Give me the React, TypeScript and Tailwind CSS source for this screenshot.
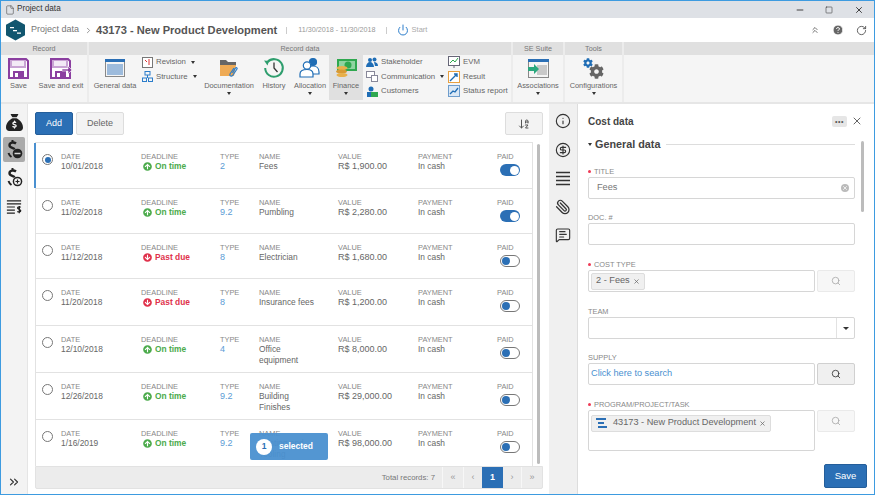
import { ChevronRight, ChevronsRight, ChevronsUp, CircleHelp, File, Info, Minus, Paperclip, Power, RotateCw, Search, Square, X, CircleDollarSign, MessageSquareText, ArrowDownAZ } from 'lucide-react'
import { FaSackDollar } from 'react-icons/fa6'
import { FaArrowCircleUp, FaArrowCircleDown, FaCog } from 'react-icons/fa'
import type { ReactNode } from 'react'

const rows = [
  { date: '10/01/2018', late: false, type: '2', name: 'Fees', value: 'R$ 1,900.00', paid: true, h: 'h-[46px]' },
  { date: '11/02/2018', late: false, type: '9.2', name: 'Pumbling', value: 'R$ 2,280.00', paid: true, h: 'h-[45px]' },
  { date: '11/12/2018', late: true, type: '8', name: 'Electrician', value: 'R$ 1,680.00', paid: false, h: 'h-[45px]' },
  { date: '11/20/2018', late: true, type: '8', name: 'Insurance fees', value: 'R$ 1,200.00', paid: false, h: 'h-[47px]' },
  { date: '12/10/2018', late: false, type: '4', name: 'Office equipment', value: 'R$ 8,000.00', paid: false, h: 'h-[47px]' },
  { date: '12/26/2018', late: false, type: '9.2', name: 'Building Finishes', value: 'R$ 29,000.00', paid: false, h: 'h-[47px]' },
  { date: '1/16/2019', late: false, type: '9.2', name: 'Printing and Tooling', value: 'R$ 98,000.00', paid: false, h: 'h-[46px]' },
]

function Caret() {
  return <span className="inline-block w-0 h-0 border-x-[2.5px] border-x-transparent border-t-[3px] border-t-[#333]" />
}

function Floppy({ exit }: { exit?: boolean }) {
  return (
    <svg width="22" height="21" viewBox="0 0 22 21">
      <path d="M1 1h17l2 2v17H1z" fill="#fff" stroke="#8b3fa0" strokeWidth="2" />
      <rect x="2" y="2" width="16" height="8" fill="#c9a4d4" />
      <rect x="4" y="3" width="12" height="5" fill="#f3eaf6" />
      <rect x="5" y="13" width="11" height="7" fill="#8b3fa0" />
      <rect x="7" y="15" width="3" height="4" fill="#fff" />
      {exit && <path d="M12 11h6V8l4 4-4 4v-3h-6z" fill="#8b3fa0" stroke="#fff" strokeWidth=".6" />}
    </svg>
  )
}

function BigButton({ w, label, icon, caret, active }: { w: string; label: string; icon: ReactNode; caret?: boolean; active?: boolean }) {
  return (
    <div className={`${w} h-[45px] flex flex-col items-center pt-[2px] shrink-0 ${active ? 'bg-[#e0e0e0]' : ''}`}>
      <div className="h-[22px] flex items-center justify-center">{icon}</div>
      <div className="text-[7.4px] leading-[9px] mt-[1.5px] text-[#666] whitespace-nowrap">{label}</div>
      {caret && <div className="leading-[6px] mt-[2px] flex"><Caret /></div>}
    </div>
  )
}

function SmallButton({ label, icon, caret }: { label: string; icon: ReactNode; caret?: boolean }) {
  return (
    <div className="h-[14.5px] flex items-center gap-[2px] text-[7.8px] text-[#666] whitespace-nowrap">
      <span className="w-[12px] h-[12px] flex items-center justify-center shrink-0">{icon}</span>
      <span className="ml-[1px]">{label}</span>
      {caret && <span className="ml-[3px] flex"><Caret /></span>}
    </div>
  )
}

function Group({ title, w, children }: { title: string; w: string; children?: ReactNode }) {
  return (
    <div className={`${w} shrink-0 flex flex-col border-r-2 border-[#ececec] last:border-r-0`}>
      <div className="h-[13px] bg-[#e0e0e0] text-[7.2px] leading-[13px] text-center text-[#777]">{title}</div>
      <div className="flex-1 flex bg-[#f5f5f5]">{children}</div>
    </div>
  )
}

function Cell({ w, label, children }: { w: string; label: string; children: ReactNode }) {
  return (
    <div className={`${w} shrink-0`}>
      <div className="text-[7.4px] leading-[9px] text-[#888]">{label}</div>
      {children}
    </div>
  )
}

function Toggle({ on }: { on: boolean }) {
  return on ? (
    <div className="w-[20px] h-[12px] rounded-full bg-[#2b6fb5] flex items-center justify-end pr-[1px]">
      <div className="w-[9px] h-[9px] rounded-full bg-white" />
    </div>
  ) : (
    <div className="w-[20px] h-[12px] rounded-full bg-white border border-[#777] flex items-center pl-[1px]">
      <div className="w-[8px] h-[8px] rounded-full bg-[#2b6fb5]" />
    </div>
  )
}

function Row({ r, selected }: { r: (typeof rows)[number]; selected: boolean }) {
  return (
    <div className={`${r.h} relative flex pt-[9px] border-b border-[#e2e2e2] last:border-b-0`}>
      {selected && <div className="absolute left-[-2px] top-0 bottom-0 w-[2px] bg-[#4a90d0]" />}
      <div className="w-[25px] pl-[6px] pt-[2px] shrink-0">
        <div className="w-[11px] h-[11px] rounded-full border border-[#777] bg-white flex items-center justify-center">
          {selected && <div className="w-[6px] h-[6px] rounded-full bg-[#2b6fb5]" />}
        </div>
      </div>
      <Cell w="w-[80px]" label="DATE">
        <div className="text-[8.4px] leading-[11px] text-[#666]">{r.date}</div>
      </Cell>
      <Cell w="w-[79px]" label="DEADLINE">
        <div className={`flex items-center gap-[3px] pl-[2px] text-[8.4px] leading-[11px] font-bold ${r.late ? 'text-[#e0314b]' : 'text-[#4cab4c]'}`}>
          {r.late ? <FaArrowCircleDown size={9} /> : <FaArrowCircleUp size={9} />}
          {r.late ? 'Past due' : 'On time'}
        </div>
      </Cell>
      <Cell w="w-[39px]" label="TYPE">
        <div className="text-[9px] leading-[11px] text-[#5b9bd5]">{r.type}</div>
      </Cell>
      <Cell w="w-[79px]" label="NAME">
        <div className="text-[8.4px] leading-[11px] text-[#666] w-[62px]">{r.name}</div>
      </Cell>
      <Cell w="w-[80px]" label="VALUE">
        <div className="text-[9px] leading-[11px] text-[#666]">{r.value}</div>
      </Cell>
      <Cell w="w-[79px]" label="PAYMENT">
        <div className="text-[8.4px] leading-[11px] text-[#666]">In cash</div>
      </Cell>
      <Cell w="w-[30px]" label="PAID">
        <div className="pl-[3px] pt-[3px]"><Toggle on={r.paid} /></div>
      </Cell>
    </div>
  )
}

function CostIcon({ plus, lines }: { plus?: boolean; lines?: boolean }) {
  if (lines) {
    return (
      <svg width="16" height="16" viewBox="0 0 18 16" fill="none" stroke="#222" strokeWidth="1.4">
        <path d="M1 1h16M1 4.500h16M1 8h9M1 11.500h9M1 15h9" />
        <path d="M16.500 8.500c-.5-.8-3.500-1-3.500.7 0 1.900 3.600 1 3.600 3 0 1.700-3.100 1.500-3.800.6M15 7v8" />
      </svg>
    )
  }
  return (
    <svg width="17" height="21" viewBox="0 0 17 21" fill="none">
      <path d="M10 4.500C8 3 3.500 3 3.500 6.200 3.500 9.200 8 8.500 8.500 10.500" stroke="#222" strokeWidth="2.400" />
      <path d="M6.500 1v3" stroke="#222" strokeWidth="2" />
      <path d="M2.500 14c.5 1.500 1.500 3 3 4" stroke="#222" strokeWidth="2" />
      <circle cx="11.500" cy="14.500" r="4.800" fill="#222" />
      {plus ? <><circle cx="11.500" cy="14.500" r="3.300" fill="#f3f3f3" /><path d="M9.500 14.500h4M11.500 12.500v4" stroke="#222" strokeWidth="1.200" /></> : <path d="M8.500 14.500h6" stroke="#d8d8d8" strokeWidth="1.500" />}
    </svg>
  )
}

function Label({ text, req }: { text: string; req?: boolean }) {
  return (
    <div className="h-[11px] flex items-center text-[7.4px] text-[#888] whitespace-nowrap">
      {req && <span className="w-[3px] h-[3px] rounded-full bg-[#ef3a55] mr-[3px]" />}
      {text}
    </div>
  )
}

function SearchBtn({ active }: { active?: boolean }) {
  return (
    <div className={`w-[38px] h-[22px] shrink-0 rounded-[2px] border flex items-center justify-center ${active ? 'bg-[#f0f0f0] border-[#d0d0d0] text-[#333]' : 'bg-[#f7f7f7] border-[#eaeaea] text-[#aaa]'}`}>
      <Search size={10} strokeWidth={2} />
    </div>
  )
}

const inputCls = 'h-[22px] rounded-[2px] border border-[#d6d6d6] bg-white'

export default function App() {
  return (
    <div className="relative w-[875px] h-[495px] overflow-hidden bg-white border border-[#3d9be0] flex flex-col text-[#666]" style={{ fontFamily: '"Liberation Sans", sans-serif' }}>
      {/* window title */}
      <div className="h-[17px] bg-[#dee1e6] flex items-center pl-[4px] shrink-0">
        <File size={10} strokeWidth={1.200} className="text-[#333]" />
        <span className="ml-[2px] text-[8.200px] text-[#333]">Project data</span>
        <div className="ml-auto flex items-center text-[#222]">
          <span className="w-[29px] flex justify-center"><Minus size={10} /></span>
          <span className="w-[30px] flex justify-center"><Square size={8} strokeWidth={1.500} /></span>
          <span className="w-[30px] flex justify-center"><X size={10} /></span>
        </div>
      </div>

      {/* breadcrumb */}
      <div className="h-[24px] bg-white flex items-center pl-[4px] shrink-0">
        <svg width="21" height="22" viewBox="0 0 21 22">
          <path d="M10.500 0.500l9.500 5.200v10.600l-9.500 5.200L1 16.300V5.700z" fill="#11566f" />
          <path d="M5 8h4v1.300H5zM8 11h4v1.300H8zM12 13.500h4v1.300h-4z" fill="#fff" />
        </svg>
        <span className="ml-[5px] text-[9px] text-[#777]">Project data</span>
        <ChevronRight size={9} className="ml-[5px] text-[#777]" />
        <span className="ml-[3px] text-[11.100px] font-bold text-[#555]">43173 - New Product Development</span>
        <span className="ml-[9px] w-px h-[7px] bg-[#ccc]" />
        <span className="ml-[11px] text-[7.200px] text-[#999]">11/30/2018 - 11/30/2018</span>
        <span className="ml-[10px] w-px h-[7px] bg-[#ccc]" />
        <Power size={12} strokeWidth={2} className="ml-[10px] text-[#2b7dcb]" />
        <span className="ml-[3px] text-[7.500px] text-[#aaa]">Start</span>
        <div className="ml-auto flex items-center text-[#555] pr-[1px]">
          <span className="w-[22px] flex justify-center"><ChevronsUp size={10} /></span>
          <span className="w-[23px] flex justify-center"><CircleHelp size={12} fill="#666" stroke="#fff" /></span>
          <span className="w-[24px] flex justify-center"><RotateCw size={11} /></span>
        </div>
      </div>

      {/* ribbon */}
      <div className="h-[62px] flex shrink-0 border-b-2 border-[#e6e6e6]">
        <Group title="Record" w="w-[88px]">
          <BigButton w="w-[35px]" label="Save" icon={<Floppy />} />
          <BigButton w="w-[50px]" label="Save and exit" icon={<Floppy exit />} />
        </Group>
        <Group title="Record data" w="w-[424px]">
          <BigButton w="w-[52px]" label="General data" icon={
            <svg width="20" height="18" viewBox="0 0 20 18"><rect x=".5" y=".5" width="19" height="17" fill="#f5f5f5" stroke="#888" /><rect x="0" y="0" width="20" height="3" fill="#2b6fb5" /><rect x="2" y="5" width="16" height="11" fill="#9dbbdc" /></svg>
          } />
          <div className="w-[60px] flex flex-col">
            <SmallButton label="Revision" caret icon={<svg width="11" height="11"><rect x=".5" y=".5" width="10" height="10" fill="#fff" stroke="#777" /><path d="M3 3l2 2M7 2v6" stroke="#d33" /></svg>} />
            <SmallButton label="Structure" caret icon={<svg width="11" height="11" fill="none" stroke="#2b7dcb"><rect x="3" y=".5" width="5" height="3.500" /><rect x=".5" y="7" width="4" height="3.500" /><rect x="6.500" y="7" width="4" height="3.500" /><path d="M5.500 4v3" /></svg>} />
          </div>
          <BigButton w="w-[56px]" label="Documentation" caret icon={
            <svg width="20" height="22" viewBox="0 0 20 22"><path d="M1 3h6l2 2h8v4H1z" fill="#666" /><path d="M1 8h16l-2 11H1z" fill="#eeaa55" /><path d="M15 11l-4 6c-1 2 2 3 3 1l4-6c.7-1-1-2-1.500-1l-3 5" fill="none" stroke="#2b7dcb" strokeWidth="1.200" /></svg>
          } />
          <BigButton w="w-[34px]" label="History" icon={
            <svg width="22" height="22" viewBox="0 0 22 22" fill="none"><path d="M4.500 5A8.800 8.800 0 1 1 2.200 11" stroke="#2f9e6e" strokeWidth="2" /><path d="M1 3.500l5 .5-1.500 4.500z" fill="#2f9e6e" /><path d="M11 5.500V11l3.500 4" stroke="#333" strokeWidth="1.300" /></svg>
          } />
          <BigButton w="w-[38px]" label="Allocation" caret icon={
            <svg width="22" height="22" viewBox="0 0 22 22" fill="#fff" stroke="#1f6db5" strokeWidth="1.200"><circle cx="14" cy="5" r="3.500" fill="#1f6db5" /><path d="M9 14c0-3 2-5 5-5s6 2 6 6v2h-8" /><circle cx="8" cy="8.500" r="3.700" /><path d="M1 20v-3c0-3 3-4.500 7-4.500s6 2 6 4.500v3z" /></svg>
          } />
          <BigButton w="w-[34px]" active label="Finance" caret icon={
            <svg width="22" height="20" viewBox="0 0 22 20"><rect x="2" y="1" width="20" height="12" fill="#2fa84f" /><rect x="4" y="3" width="16" height="8" fill="#8fd4a0" /><circle cx="13" cy="7" r="3.500" fill="#2fa84f" /><ellipse cx="7" cy="10" rx="5.500" ry="2" fill="#e8b04a" /><ellipse cx="6.500" cy="13.500" rx="5.500" ry="2" fill="#d99a33" /><ellipse cx="7" cy="17" rx="5.500" ry="2" fill="#e8b04a" /></svg>
          } />
          <div className="w-[85px] pl-[3px]">
            <SmallButton label="Stakeholder" icon={<svg width="12" height="11" fill="#1f6db5"><circle cx="4" cy="3" r="2" /><circle cx="8.500" cy="2.500" r="2" /><path d="M0 10c0-3 2-5 4-5s4 2 4 5zM8 5c2 0 4 1 4 4H9z" /></svg>} />
            <SmallButton label="Communication" caret icon={<svg width="12" height="11" fill="#fff" stroke="#889"><rect x=".5" y=".5" width="8" height="6" /><rect x="5.500" y="4.500" width="6" height="6" /></svg>} />
            <SmallButton label="Customers" icon={<svg width="12" height="11"><circle cx="5" cy="3" r="2.500" fill="#1f6db5" /><rect x="1" y="6" width="8" height="5" fill="#1f6db5" /><rect x="5" y="6" width="7" height="5" fill="#2fa84f" /></svg>} />
          </div>
          <div className="flex-1">
            <SmallButton label="EVM" icon={<svg width="12" height="12" fill="none"><rect x=".5" y=".5" width="11" height="9" fill="#fff" stroke="#667" /><path d="M2 7l3-3 2 2 3-4" stroke="#2fa84f" /><path d="M6 10v2" stroke="#667" /></svg>} />
            <SmallButton label="Result" icon={<svg width="12" height="12" fill="none"><rect x=".5" y=".5" width="11" height="11" fill="#fff" stroke="#e8a040" /><path d="M2 10l7-7M6 3h3v3" stroke="#1f6db5" strokeWidth="1.400" /></svg>} />
            <SmallButton label="Status report" icon={<svg width="12" height="12" fill="none"><rect x=".5" y=".5" width="11" height="11" fill="#dbe8f5" stroke="#6f9dcc" /><path d="M2 9l3-3 2 1 3-4" stroke="#1f6db5" strokeWidth="1.300" /></svg>} />
          </div>
        </Group>
        <Group title="SE Suite" w="w-[52px]">
          <BigButton w="w-full" label="Associations" caret icon={
            <svg width="21" height="19" viewBox="0 0 21 19"><rect x=".5" y=".5" width="20" height="18" fill="#f5f5f5" stroke="#888" /><rect x="0" y="0" width="21" height="3" fill="#2b6fb5" /><rect x="9" y="6" width="10" height="10" fill="#c9c9c9" /><path d="M0 8h6V5l5 5-5 5v-3H0z" fill="#2aa87e" /></svg>
          } />
        </Group>
        <Group title="Tools" w="w-[59px]">
          <BigButton w="w-full" label="Configurations" caret icon={
            <div className="relative w-[21px] h-[21px]">
              <FaCog size={10} className="absolute left-0 top-0 text-[#1f6db5]" />
              <FaCog size={15} className="absolute right-0 bottom-0 text-[#666]" />
            </div>
          } />
        </Group>
        <Group title="" w="flex-1" />
      </div>

      {/* main */}
      <div className="flex-1 flex min-h-0">
        <div className="w-[27px] shrink-0 bg-[#f3f3f3] flex flex-col items-center pt-[5px] border-r border-[#e5e5e5]">
          <div className="h-[26px] flex items-center"><FaSackDollar size={17} className="text-[#222]" /></div>
          <div className="mt-[2px] w-[22px] h-[25px] bg-[#ababab] rounded-[2px] flex items-center justify-center"><CostIcon /></div>
          <div className="mt-[3px] h-[25px] flex items-center"><CostIcon plus /></div>
          <div className="mt-[4px] h-[25px] flex items-center"><CostIcon lines /></div>
          <ChevronsRight size={14} className="mt-auto mb-[5px] text-[#333]" />
        </div>

        <div className="w-[521px] shrink-0 bg-white px-[6px] pl-[7px] pt-[8px] flex flex-col">
          <div className="h-[24px] flex items-start gap-[3px] shrink-0">
            <div className="w-[38px] h-[23px] rounded-[2px] bg-[#2b6fb5] border border-[#245e9a] text-white text-[9px] flex items-center justify-center">Add</div>
            <div className="w-[48px] h-[23px] rounded-[2px] bg-[#f3f3f3] border border-[#ddd] text-[9px] flex items-center justify-center text-[#666]">Delete</div>
            <div className="ml-auto w-[38px] h-[23px] rounded-[2px] bg-[#f3f3f3] border border-[#ddd] flex items-center justify-center"><ArrowDownAZ size={12} className="text-[#555]" /></div>
          </div>
          <div className="mt-[6px] flex shrink-0">
            <div className="w-[498px] border-t border-x border-[#e2e2e2] flex flex-col">
              {rows.map((r, i) => <Row key={i} r={r} selected={i === 0} />)}
            </div>
            <div className="ml-[4px] w-[3px] mt-[2px] h-[320px] rounded-full bg-[#bcbcbc]" />
          </div>
          <div className="h-[23px] bg-[#ececec] border border-[#e2e2e2] rounded-b-[2px] flex items-center justify-end text-[7.800px] text-[#777] shrink-0">
            <span className="mr-[7px]">Total records: 7</span>
            <span className="w-[21px] h-full flex items-center justify-center border-l border-[#f7f7f7] text-[#999] text-[9px]">«</span>
            <span className="w-[19px] h-full flex items-center justify-center border-l border-[#f7f7f7] text-[#999] text-[9px]">‹</span>
            <span className="w-[21px] h-full flex items-center justify-center bg-[#2b6fb5] text-white font-bold text-[9px]">1</span>
            <span className="w-[18px] h-full flex items-center justify-center text-[#999] text-[9px]">›</span>
            <span className="w-[21px] h-full flex items-center justify-center border-l border-[#f7f7f7] text-[#999] text-[9px]">»</span>
          </div>
        </div>

        <div className="w-[28px] shrink-0 bg-[#f0f0f0] flex flex-col items-center pt-[9px] gap-[12.500px] text-[#333]">
          <Info size={16} strokeWidth={1.700} />
          <CircleDollarSign size={16} strokeWidth={1.700} />
          <svg width="16" height="16" viewBox="0 0 16 16" stroke="currentColor" strokeWidth="1.400"><path d="M1 2.500h14M1 6.500h14M1 10.500h14M1 14.500h14" /></svg>
          <Paperclip size={16} strokeWidth={1.900} className="-scale-x-100" />
          <MessageSquareText size={16} strokeWidth={1.700} />
        </div>

        <div className="flex-1 min-w-0 border-l border-[#ddd] pl-[10px] pr-[19px] pt-[10px] relative">
          <div className="flex items-center h-[14px]">
            <span className="text-[10px] font-bold text-[#444]">Cost data</span>
            <span className="ml-auto w-[15px] h-[11px] rounded-[2px] bg-[#e6e6e6] text-[#555] text-[7px] leading-[9px] flex items-center justify-center tracking-[0.5px]">•••</span>
            <X size={12} className="ml-[4px] mr-[-8px] text-[#666]" />
          </div>
          <div className="flex items-center h-[14px] mt-[9px]">
            <Caret />
            <span className="ml-[3px] text-[10.800px] font-bold text-[#444]">General data</span>
            <div className="flex-1 ml-[6px] h-px bg-[#ddd]" />
          </div>
          <div className="absolute right-[10px] top-[37px] w-[3px] h-[71px] rounded-full bg-[#bcbcbc]" />

          <div className="mt-[15px]"><Label text="TITLE" req /></div>
          <div className={`${inputCls} flex items-center pl-[8px] pr-[5px] text-[9.200px] text-[#777]`}>
            Fees
            <span className="ml-auto w-[8px] h-[8px] rounded-full bg-[#bbb] text-white flex items-center justify-center"><X size={6} strokeWidth={3} /></span>
          </div>

          <div className="mt-[13px]"><Label text="DOC. #" /></div>
          <div className={inputCls} />

          <div className="mt-[14px]"><Label text="COST TYPE" req /></div>
          <div className="flex gap-[2px]">
            <div className={`${inputCls} flex-1 flex items-center pl-[2px]`}>
              <span className="h-[17px] px-[4px] bg-[#f0f0f0] border border-[#ddd] rounded-[2px] flex items-center text-[9.200px] text-[#666]">2 - Fees<X size={7} strokeWidth={2.500} className="ml-[3px]" /></span>
            </div>
            <SearchBtn />
          </div>

          <div className="mt-[14px]"><Label text="TEAM" /></div>
          <div className={`${inputCls} flex justify-end`}>
            <span className="w-[18px] border-l border-[#e2e2e2] flex items-center justify-center"><span className="w-0 h-0 border-x-[3px] border-x-transparent border-t-[3px] border-t-[#333]" /></span>
          </div>

          <div className="mt-[13px]"><Label text="SUPPLY" /></div>
          <div className="flex gap-[2px]">
            <div className={`${inputCls} flex-1 flex items-center pl-[2px] text-[9.200px] text-[#4a90d0]`}>Click here to search</div>
            <SearchBtn active />
          </div>

          <div className="mt-[14px]"><Label text="PROGRAM/PROJECT/TASK" req /></div>
          <div className="flex gap-[2px] items-start">
            <div className="flex-1 h-[41px] rounded-[2px] border border-[#d6d6d6] pl-[2px]">
              <span className="inline-flex h-[17px] px-[4px] bg-[#f0f0f0] border border-[#ddd] rounded-[2px] items-center text-[9.200px] text-[#666] whitespace-nowrap">
                <svg width="11" height="10" viewBox="0 0 11 10" fill="#2b6fb5"><rect x="0" y="0" width="10" height="2" /><rect x="2" y="4" width="6" height="2" /><rect x="2" y="8" width="9" height="2" /></svg>
                <span className="ml-[6px]">43173 - New Product Development</span>
                <X size={7} strokeWidth={2.500} className="ml-[3px]" />
              </span>
            </div>
            <SearchBtn />
          </div>

          <div className="absolute right-[7px] bottom-[6px] w-[43px] h-[24px] rounded-[2px] bg-[#2b6fb5] border border-[#245e9a] text-white text-[9.500px] flex items-center justify-center">Save</div>
        </div>
      </div>

      {/* selected badge */}
      <div className="absolute left-[249px] top-[432px] w-[78px] h-[27px] rounded-[2px] bg-[#4a90d0]/95 flex items-center pl-[6px] text-white text-[8.500px] font-bold">
        <span className="w-[16px] h-[16px] rounded-full bg-white text-[#2b6fb5] flex items-center justify-center">1</span>
        <span className="ml-[7px]">selected</span>
      </div>
    </div>
  )
}
